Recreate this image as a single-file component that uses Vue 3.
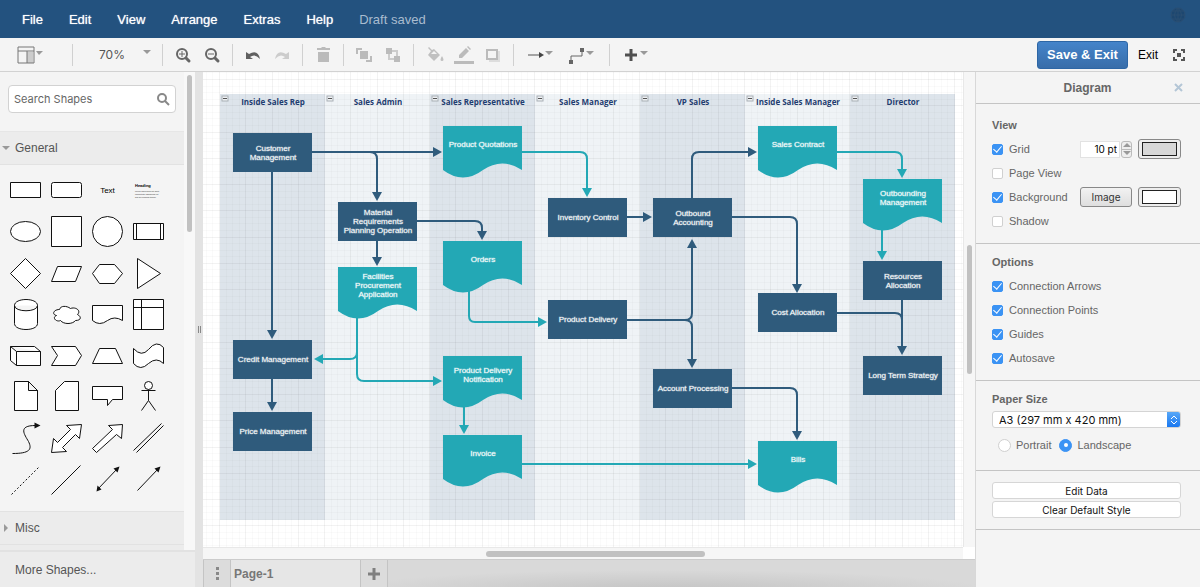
<script setup>
import { ref } from 'vue'

const menus = ['File', 'Edit', 'View', 'Arrange', 'Extras', 'Help']

const shapes = [
  { name: 'Rectangle', d: 'M-15-8H15V7H-15Z' },
  { name: 'Rounded Rectangle', d: 'M-13-8H13Q15-8 15-6V5Q15 7 13 7H-13Q-15 7-15 5V-6Q-15-8-13-8Z' },
  { name: 'Text', kind: 'text' },
  { name: 'Textbox', kind: 'heading' },
  { name: 'Ellipse', d: 'M-15 0A15 10 0 1 1 15 0A15 10 0 1 1-15 0Z' },
  { name: 'Square', d: 'M-15-15H15V15H-15Z' },
  { name: 'Circle', d: 'M-15 0A15 15 0 1 1 15 0A15 15 0 1 1-15 0Z' },
  { name: 'Process', d: 'M-15-8H15V8H-15ZM-12-8V8M12-8V8' },
  { name: 'Diamond', d: 'M0-15L15 0L0 15L-15 0Z' },
  { name: 'Parallelogram', d: 'M-15 8L-9-7H15L9 8Z' },
  { name: 'Hexagon', d: 'M-15 0L-8-9H7L15 0L7 10H-8Z' },
  { name: 'Triangle', d: 'M-11-15L12 0L-11 15Z' },
  { name: 'Cylinder', d: 'M-11-9C-11-17 12-17 12-9V9C12 17-11 17-11 9ZM-11-9C-11-2 12-2 12-9' },
  { name: 'Cloud', d: 'M-7-5C-13-5-15 0-10 1C-15 3-10 8-6 6C-3 10 6 10 9 6C15 6 15 2 11 0C15-4 9-8 4-6C0-9-6-9-7-5Z' },
  { name: 'Document', d: 'M-15-9H15V6Q7 1 0 6Q-8 12-15 6Z' },
  { name: 'Internal Storage', d: 'M-15-15H15V15H-15ZM-7-15V15M-15-7H15' },
  { name: 'Cube', d: 'M-15-9H9L15-4V10H-9L-15 5ZM-15-9L-9-4H15M-9-4V10' },
  { name: 'Step', d: 'M-15-9H9L15 0L9 10H-15L-9 0Z' },
  { name: 'Trapezoid', d: 'M-15 8L-8-7H8L15 8Z' },
  { name: 'Tape', d: 'M-15-7Q-7 2 0-6Q8-16 15-8V8Q8 1 0 8Q-8 16-15 8Z' },
  { name: 'Note', d: 'M-11-15H3L12-6V14H-11ZM3-15V-6H12Z' },
  { name: 'Card', d: 'M-2-15H12V14H-11V-6Z' },
  { name: 'Callout', d: 'M-15-10H15V3H5L0 9V3H-15Z' },
  { name: 'Actor', d: 'M-4-11A4 4 0 1 1 4-11A4 4 0 1 1-4-11ZM0-7V4M-7-6H7M0 4L-7 14M0 4L7 14' },
  { name: 'Curve', d: 'M-13 15C4 15 7 11 3 3C-1-4-8-13 10-13', open: true, head: 'M9-16L15-13L9-10Z' },
  { name: 'Bidirectional Arrow', d: 'M15-14L13 0L9-4L-4 9L0 13L-15 14L-13 0L-9 4L4-9L0-13Z' },
  { name: 'Arrow', d: 'M15-14L14 0L9-4L-11 14L-15 10L5-9L1-13Z' },
  { name: 'Link', d: 'M-15 12L13-15M-12 14L15-13', open: true },
  { name: 'Dashed Line', d: 'M-14 15L14-13', open: true, dash: '2 2' },
  { name: 'Line', d: 'M-15 15L14-14', open: true },
  { name: 'Bidirectional Connector', d: 'M-10 10L10-11', open: true, head: 'M12-13L10-7L6-11ZM-11 12L-10 6L-6 10Z' },
  { name: 'Directional Connector', d: 'M-11 11L10-11', open: true, head: 'M12-13L10-7L6-11Z' }
]

const laneNames = ['Inside Sales Rep', 'Sales Admin', 'Sales Representative', 'Sales Manager', 'VP Sales', 'Inside Sales Manager', 'Director']
const lanes = laneNames.map((title, i) => ({ title, x: 17 + i * 105 }))

const node = (lane, y, text, doc = false) => ({
  x: 30 + lane * 105,
  y,
  lines: text.split('|'),
  doc
})
const nodes = [
  node(0, 61, 'Customer|Management'),
  node(0, 268, 'Credit Management'),
  node(0, 340, 'Price Management'),
  node(1, 130, 'Material|Requirements|Planning Operation'),
  node(1, 195, 'Facilities|Procurement|Application', true),
  node(2, 54, 'Product Quotations', true),
  node(2, 169, 'Orders', true),
  node(2, 284, 'Product Delivery|Notification', true),
  node(2, 363, 'Invoice', true),
  node(3, 126, 'Inventory Control'),
  node(3, 228, 'Product Delivery'),
  node(4, 126, 'Outbound|Accounting'),
  node(4, 297, 'Account Processing'),
  node(5, 54, 'Sales Contract', true),
  node(5, 221, 'Cost Allocation'),
  node(5, 369, 'Bills', true),
  node(6, 107, 'Outbounding|Management', true),
  node(6, 189, 'Resources|Allocation'),
  node(6, 284, 'Long Term Strategy')
]
const lineY = (n, i) => n.y + (n.doc ? 21 : 22) + Math.ceil((i - (n.lines.length - 1) / 2) * 9)

const navyEdges = [
  'M109 80H235', 'M167 80Q174 80 174 87V125', 'M69 100V263', 'M69 306V335',
  'M214 149H272Q279 149 279 156V164', 'M174 169V190',
  'M424 145H445', 'M424 248H482Q489 248 489 241V171', 'M482 248Q489 248 489 255V292',
  'M489 127V87Q489 80 496 80H550', 'M529 145H587Q594 145 594 152V217',
  'M699 228V279', 'M529 316H587Q594 316 594 323V364'
]
const tealEdges = [
  'M319 80H377Q384 80 384 87V121', 'M154 245V280Q154 287 147 287H115', 'M154 280V302Q154 309 161 309H235',
  'M266 219V244Q266 250 272 250H340', 'M261 335V358', 'M319 392H550',
  'M634 80H692Q699 80 699 87V102', 'M679 157V184'
]

const minor = Array.from({ length: 16 }, (_, i) => i).filter(i => i % 4).map(i => Math.round(i * 105 / 16))
const major = [0, 26, 53, 79]

const view = ref({ grid: true, pageView: false, background: true, shadow: false })
const options = ref([
  { id: 'arrows', label: 'Connection Arrows', on: true },
  { id: 'points', label: 'Connection Points', on: true },
  { id: 'guides', label: 'Guides', on: true },
  { id: 'autosave', label: 'Autosave', on: true }
])
const orientation = ref('landscape')
const gridSize = ref('10 pt')
</script>

<template>
  <div class="app">
    <header class="menubar">
      <button v-for="m in menus" :key="m" class="menu">{{ m }}</button>
      <span class="status">Draft saved</span>
      <button class="globe" aria-label="Language">
        <svg width="16" height="16" viewBox="0 0 16 16"><circle cx="8" cy="8" r="7" /><path d="M1 8H15M8 1V15M3 4H13M3 12H13M8 1Q1 8 8 15Q15 8 8 1" /></svg>
      </button>
    </header>

    <div class="toolbar">
      <div class="group g-view">
        <button class="tool wide" aria-label="View">
          <svg width="28" height="20" viewBox="0 0 28 20"><path d="M11 7H17V18H11Z" fill="#ccc" /><path d="M2 2H18V18H2ZM2 6H18M11 6V18" fill="none" stroke="#777" /><path d="M20 6H27L23 10Z" fill="#999" /></svg>
        </button>
      </div>
      <div class="group g-zoom">
        <button class="zoom"><span>70%</span><svg width="8" height="9" viewBox="0 0 8 9"><path d="M0 0H8L4 4Z" fill="#999" /></svg></button>
      </div>
      <div class="group g-pair">
        <button class="tool" aria-label="Zoom in"><svg width="18" height="18" viewBox="0 0 18 18" fill="none" stroke="#666"><circle cx="8" cy="8" r="5" stroke-width="2" /><path d="M12 12L15 15" stroke-width="3" stroke-linecap="round" /><path d="M5 8H11M8 5V11" /></svg></button>
        <button class="tool" aria-label="Zoom out"><svg width="18" height="18" viewBox="0 0 18 18" fill="none" stroke="#666"><circle cx="8" cy="8" r="5" stroke-width="2" /><path d="M12 12L15 15" stroke-width="3" stroke-linecap="round" /><path d="M5 8H11" /></svg></button>
      </div>
      <div class="group g-pair">
        <button class="tool" aria-label="Undo"><svg width="18" height="18" viewBox="0 0 18 18"><path d="M2 6V13H9L6 11Q11 7 16 13Q14 3 5 8Z" fill="#606060" /></svg></button>
        <button class="tool" aria-label="Redo"><svg width="18" height="18" viewBox="0 0 18 18"><path d="M16 6V13H9L12 11Q7 7 2 13Q4 3 13 8Z" fill="#ccc" /></svg></button>
      </div>
      <div class="group g-single">
        <button class="tool" aria-label="Delete"><svg width="18" height="18" viewBox="0 0 18 18" fill="#bbb"><path d="M3 2H7L8 1H11L12 2H16V4H3ZM4 6H15V16H4Z" /></svg></button>
      </div>
      <div class="group g-pair">
        <button class="tool" aria-label="To front"><svg width="18" height="18" viewBox="0 0 18 18"><path d="M2 8V3H7M11 15H16V10" fill="none" stroke="#bbb" stroke-width="2" /><path d="M5 5H13V13H5Z" fill="#bbb" /></svg></button>
        <button class="tool" aria-label="To back"><svg width="18" height="18" viewBox="0 0 18 18"><path d="M5 5H13V13H5Z" fill="none" stroke="#ccc" stroke-width="2" /><path d="M2 2H8V8H2ZM10 10H16V16H10Z" fill="#bbb" /></svg></button>
      </div>
      <div class="group g-style">
        <button class="tool" aria-label="Fill color"><svg width="18" height="18" viewBox="0 0 18 18"><path d="M2 2L3 1L6 4L8 3L14 9L8 15L2 9L5 5ZM16 10Q19 15 16 15Q13 15 16 10Z" fill="#c0c0c0" /><path d="M5 8L8 5L11 8Z" fill="#f4f4f4" /></svg></button>
        <button class="tool" aria-label="Line color"><svg width="20" height="18" viewBox="0 0 20 18" fill="#bbb"><path d="M5 12V9L12 2L15 5L8 12ZM13 1L14 0L17 3L16 4Z" /><path d="M0 15H20V18H0Z" /></svg></button>
        <button class="tool" aria-label="Shadow"><svg width="18" height="18" viewBox="0 0 18 18"><path d="M5 5H16V16H5Z" fill="#ddd" /><path d="M3 4H13V13H3Z" fill="#f4f4f4" stroke="#bbb" stroke-width="2" /></svg></button>
      </div>
      <div class="group g-line">
        <button class="tool wide" aria-label="Connection"><svg width="28" height="18" viewBox="0 0 28 18"><path d="M1 9H14" stroke="#555" /><path d="M12 6L17 9L12 12Z" fill="#444" /><path d="M18 5H26L22 9Z" fill="#999" /></svg></button>
        <button class="tool wide" aria-label="Waypoints"><svg width="28" height="18" viewBox="0 0 28 18"><path d="M2 15V10H13V4" fill="none" stroke="#666" /><path d="M0 14H4V18H0ZM11 2H15V6H11Z" fill="#666" /><path d="M17 5H25L21 9Z" fill="#999" /></svg></button>
      </div>
      <div class="group g-add">
        <button class="tool wide" aria-label="Insert"><svg width="28" height="18" viewBox="0 0 28 18"><path d="M8 3V15M2 9H14" stroke="#505050" stroke-width="3" /><path d="M17 5H25L21 9Z" fill="#999" /></svg></button>
      </div>
      <div class="actions">
        <button class="save">Save &amp; Exit</button>
        <button class="exit">Exit</button>
        <button class="tool full" aria-label="Fullscreen"><svg width="12" height="12" viewBox="0 0 12 12"><path d="M1 4V1H4M8 1H11V4M11 8V11H8M4 11H1V8" fill="none" stroke="#555" stroke-width="2" /><path d="M4 4H8V8H4Z" fill="#555" /></svg></button>
      </div>
    </div>

    <main class="body">
      <aside class="sidebar">
        <div class="scroller">
          <div class="sections">
            <div class="searchrow">
              <label class="search">
                <input type="text" placeholder="Search Shapes" aria-label="Search Shapes">
                <svg width="14" height="14" viewBox="0 0 14 14" fill="none" stroke="#888" stroke-width="2"><circle cx="6" cy="6" r="4" /><path d="M9 9L13 13" /></svg>
              </label>
            </div>
            <button class="section"><svg width="8" height="8" viewBox="0 0 8 8"><path d="M0 2H8L4 6Z" fill="#999" /></svg>General</button>
            <div class="palette">
              <button v-for="s in shapes" :key="s.name" class="shape" :aria-label="s.name">
                <span v-if="s.kind === 'text'" class="text-shape">Text</span>
                <svg v-else-if="s.kind === 'heading'" width="41" height="41" viewBox="0 0 41 41">
                  <text class="h-title" x="7" y="17">Heading</text>
                  <text class="h-body" x="7" y="22">Lorem ipsum dolor sit amet</text>
                  <text class="h-body" x="7" y="25">consectetur adipisicing elit</text>
                  <text class="h-body" x="7" y="28">sed do eiusmod tempor</text>
                </svg>
                <svg v-else width="41" height="41" viewBox="-20.5 -20.5 41 41">
                  <path :d="s.d" :fill="s.open ? 'none' : '#fff'" stroke="#111" :stroke-dasharray="s.dash" />
                  <path v-if="s.head" :d="s.head" fill="#111" />
                </svg>
              </button>
            </div>
            <button class="section"><svg width="8" height="8" viewBox="0 0 8 8"><path d="M2 0L6 4L2 8Z" fill="#999" /></svg>Misc</button>
            <div class="section-end"></div>
          </div>
          <div class="track"><div class="thumb"></div></div>
        </div>
        <button class="more">More Shapes...</button>
      </aside>
      <div class="splitter"><i></i></div>

      <section class="center">
        <div class="viewport">
          <svg class="canvas" width="100%" height="100%">
            <defs>
              <pattern id="grid" x="16" y="7" width="105" height="105" patternUnits="userSpaceOnUse">
                <template v-for="p in minor" :key="p">
                  <rect class="minor" :x="p" y="0" width="1" height="105" />
                  <rect class="minor" x="0" :y="p" width="105" height="1" />
                </template>
                <template v-for="p in major" :key="p">
                  <rect class="major" :x="p" y="0" width="1" height="105" />
                  <rect class="major" x="0" :y="p" width="105" height="1" />
                </template>
              </pattern>
              <marker id="navy" markerUnits="userSpaceOnUse" markerWidth="10" markerHeight="10" refX="5" refY="5" orient="auto"><path d="M0 0L9 5L0 10Z" fill="#2f5b7c" /></marker>
              <marker id="teal" markerUnits="userSpaceOnUse" markerWidth="10" markerHeight="10" refX="5" refY="5" orient="auto"><path d="M0 0L9 5L0 10Z" fill="#23a8b5" /></marker>
            </defs>
            <rect v-for="(l, i) in lanes" :key="l.title" :x="l.x" y="22" width="105" height="426" :fill="i % 2 ? '#eff3f6' : '#dde4eb'" />
            <rect width="100%" height="100%" fill="url(#grid)" />
            <g v-for="l in lanes" :key="l.title">
              <rect :x="l.x + 2" y="24" width="6" height="5" fill="#eef1f4" stroke="#aab0b6" />
              <rect :x="l.x + 3" y="26" width="4" height="1" fill="#555" />
              <text class="lane-title" :x="l.x + 53" y="33">{{ l.title }}</text>
            </g>
            <g class="edges">
              <path v-for="d in tealEdges" :key="d" :d="d" stroke="#23a8b5" marker-end="url(#teal)" />
              <path d="M634 241H692Q699 241 699 248" stroke="#2f5b7c" />
              <path v-for="d in navyEdges" :key="d" :d="d" stroke="#2f5b7c" marker-end="url(#navy)" />
            </g>
            <g v-for="n in nodes" :key="n.x + '-' + n.y">
              <path v-if="n.doc" :transform="`translate(${n.x} ${n.y})`" d="M0 0H79V44Q59 31 40 44Q20 59 0 44Z" fill="#23a8b5" />
              <rect v-else :x="n.x" :y="n.y" width="79" height="39" fill="#2f5b7c" />
              <text v-for="(t, i) in n.lines" :key="t" class="label" :x="n.x + 40" :y="lineY(n, i)">{{ t }}</text>
            </g>
          </svg>
          <div class="vtrack"><div class="vthumb"></div></div>
          <div class="htrack"><div class="hthumb"></div></div>
        </div>
        <footer class="tabs">
          <button class="tab-icon" aria-label="Pages"><svg width="3" height="13" viewBox="0 0 3 13" fill="#888"><path d="M0 0H3V3H0ZM0 5H3V8H0ZM0 10H3V13H0Z" /></svg></button>
          <button class="tab">Page-1</button>
          <button class="tab-icon" aria-label="Insert page"><svg width="12" height="12" viewBox="0 0 12 12"><path d="M6 0V12M0 6H12" stroke="#808080" stroke-width="3" /></svg></button>
        </footer>
      </section>

      <aside class="format">
        <div class="format-head"><h2>Diagram</h2><button aria-label="Close"><svg width="9" height="9" viewBox="0 0 9 9"><path d="M1 1L8 8M8 1L1 8" stroke="#b4c6d6" stroke-width="2" /></svg></button></div>
        <div class="panel first">
          <h3>View</h3>
          <div class="row">
            <label><input v-model="view.grid" type="checkbox">Grid</label>
            <div class="stepper">
              <input v-model="gridSize" type="text" aria-label="Grid size">
              <span class="steps">
                <button aria-label="Increase"><svg width="8" height="4" viewBox="0 0 8 4"><path d="M0 4L4 0L8 4Z" fill="#999" /></svg></button>
                <button aria-label="Decrease"><svg width="8" height="4" viewBox="0 0 8 4"><path d="M0 0L4 4L8 0Z" fill="#999" /></svg></button>
              </span>
            </div>
            <button class="swatch" aria-label="Grid color"><i class="gray"></i></button>
          </div>
          <div class="row"><label><input v-model="view.pageView" type="checkbox">Page View</label></div>
          <div class="row">
            <label><input v-model="view.background" type="checkbox">Background</label>
            <button class="image">Image</button>
            <button class="swatch" aria-label="Background color"><i></i></button>
          </div>
          <div class="row"><label><input v-model="view.shadow" type="checkbox">Shadow</label></div>
        </div>
        <div class="panel">
          <h3>Options</h3>
          <div v-for="o in options" :key="o.id" class="row"><label><input v-model="o.on" type="checkbox">{{ o.label }}</label></div>
        </div>
        <div class="panel">
          <h3 id="paper">Paper Size</h3>
          <div class="select">
            <select aria-labelledby="paper"><option>A3 (297 mm x 420 mm)</option><option>A4 (210 mm x 297 mm)</option></select>
            <span class="chev"><svg width="8" height="10" viewBox="0 0 8 10"><path d="M1 4L4 1L7 4M1 6L4 9L7 6" fill="none" stroke="#fff" /></svg></span>
          </div>
          <div class="row radios">
            <label><input v-model="orientation" type="radio" name="orientation" value="portrait">Portrait</label>
            <label><input v-model="orientation" type="radio" name="orientation" value="landscape">Landscape</label>
          </div>
        </div>
        <div class="panel buttons">
          <button>Edit Data</button>
          <button>Clear Default Style</button>
        </div>
      </aside>
    </main>
  </div>
</template>

<style>
body { margin: 0; }
</style>

<style scoped>
* { box-sizing: border-box; }
.app {
  display: flex;
  flex-direction: column;
  height: 100vh;
  overflow: hidden;
  background: #f4f4f4;
  color: #555;
  font-family: "Liberation Sans", Arial, sans-serif;
  font-size: 12px;
}
button { margin: 0; padding: 0; border: 0; background: none; font: inherit; color: inherit; }
svg { display: block; }
h2, h3 { margin: 0; }

.menubar { display: flex; align-items: center; flex: none; height: 38px; padding: 0 14px 0 9px; background: #23527f; font-size: 13px; }
.menu { padding: 0 13px; color: #fff; text-shadow: 0 0 1px rgba(255, 255, 255, .8); }
.status { padding: 0 13px; color: #a9bccf; }
.globe { margin: 0 0 8px auto; }
.globe svg { fill: #1d4770; stroke: #2a4f73; }

.toolbar { display: flex; align-items: center; flex: none; height: 34px; border-bottom: 1px solid #d2d2d2; background: #f4f4f4; }
.group { display: flex; align-items: center; justify-content: center; flex: none; height: 22px; border-right: 1px solid #d0d0d0; }
.tool { display: flex; justify-content: center; width: 29px; }
.tool.wide { width: 42px; }
.g-view { width: 73px; padding-right: 13px; }
.g-zoom { width: 90px; }
.g-pair { width: 70px; }
.g-single { width: 41px; }
.g-style { width: 100px; }
.g-line { width: 96px; }
.g-add { width: 54px; border: 0; }
.zoom { display: flex; align-items: center; gap: 18px; padding-left: 15px; font-family: Inter, "Noto Sans", sans-serif; }
.actions { display: flex; align-items: center; margin-left: auto; padding-right: 7px; }
.save { height: 28px; width: 91px; border: 1px solid #2d66a5; border-radius: 3px; background: linear-gradient(#4584ca, #386da9); color: #fff; font-size: 13px; font-weight: bold; }
.exit { padding: 0 6px 0 10px; color: #000; }

.body { display: flex; flex: 1; min-height: 0; }
.sidebar { display: flex; flex-direction: column; flex: none; width: 195px; background: #f4f4f4; }
.scroller { display: flex; flex: 1; min-height: 0; border-bottom: 2px solid #e2e2e2; }
.sections { display: flex; flex-direction: column; flex: 1; min-width: 0; }
.searchrow { height: 60px; padding: 13px 8px 0; border-bottom: 1px solid #e6e6e6; }
.search { display: flex; align-items: center; height: 28px; padding: 0 5px; border: 1px solid #d2d2d2; border-radius: 4px; background: #fff; }
.search input { flex: 1; min-width: 0; padding: 0; border: 0; outline: 0; background: none; font: 11px Inter, "Noto Sans", sans-serif; }
.search input::placeholder { color: #666; }
.search svg { flex: none; }
.section { display: flex; align-items: center; gap: 5px; flex: none; height: 33px; padding-left: 2px; border-bottom: 1px solid #e2e2e2; background: #ececec; }
.palette { display: grid; flex: 1; grid-template-columns: repeat(4, 41px); grid-auto-rows: 1fr; padding: 5px 5px 11px; border-bottom: 1px solid #e2e2e2; }
.shape { display: flex; align-items: center; justify-content: center; min-height: 0; }
.text-shape { font-size: 8px; color: #000; }
.h-title { font-size: 4px; font-weight: bold; fill: #000; }
.h-body { font-size: 2px; fill: #333; }
.section-end { flex: none; height: 5px; background: #ececec; }
.track { flex: none; width: 11px; padding: 3px 3px 0; background: #f8f8f8; }
.thumb { height: 33%; border-radius: 3px; background: #c1c1c1; }
.more { flex: none; height: 35px; padding-left: 15px; background: #ececec; text-align: left; }
.splitter { display: flex; align-items: center; justify-content: center; flex: none; width: 8px; background: #e3e3e3; }
.splitter i { width: 3px; height: 7px; border: 1px solid #888; border-width: 0 1px; }

.center { display: flex; flex-direction: column; flex: 1; min-width: 0; }
.viewport { display: grid; flex: 1; min-height: 0; grid-template: minmax(0, 1fr) 12px / minmax(0, 1fr) 12px; background: #fff; }
.canvas { min-width: 0; }
.minor { fill: #000; fill-opacity: .02; }
.major { fill: #000; fill-opacity: .05; }
.lane-title { font: bold 8px "Open Sans", sans-serif; text-anchor: middle; fill: #1f3d70; }
.edges path { fill: none; stroke-width: 2; }
.label { font-size: 8px; text-anchor: middle; fill: #fff; stroke: #fff; stroke-width: 1; stroke-opacity: .3; }
.vtrack { padding-left: 3px; background: #f6f6f6; border-left: 1px solid #e8e8e8; display: flex; align-items: center; }
.vthumb { width: 5px; height: 27%; border-radius: 3px; background: #c1c1c1; }
.htrack { display: flex; align-items: center; padding-left: 283px; border-top: 1px solid #e8e8e8; background: #f6f6f6; }
.hthumb { width: 46%; height: 6px; border-radius: 3px; background: #c1c1c1; }
.tabs { display: flex; flex: none; height: 28px; border-top: 1px solid #ccc; background: radial-gradient(ellipse 320px 20px at 60% 110%, #c4c4c4, #d9d9d9); color: #777; }
.tab { width: 129px; padding-left: 3px; background: #e6e6e6; font-weight: bold; text-align: left; }
.tab-icon { display: flex; align-items: center; justify-content: center; width: 28px; border: 1px solid #c4c4c4; border-width: 0 1px; background: #dcdcdc; }

.format { flex: none; width: 225px; border-left: 1px solid #d8d8d8; background: #f4f4f4; color: #666; font-size: 11px; }
.format-head { display: flex; align-items: center; height: 32px; padding: 0 17px; border-bottom: 1px solid #c4c4c4; }
.format-head h2 { flex: 1; padding-left: 8px; font-size: 12px; text-align: center; }
.panel { padding: 8px 19px 10px 16px; border-bottom: 1px solid #c4c4c4; }
.panel.first { padding-top: 11px; }
.panel h3 { margin-bottom: 2px; font-size: 11px; line-height: 20px; }
.row { display: flex; align-items: center; height: 24px; }
.row label { display: flex; align-items: center; flex: 1; gap: 6px; }
.row input[type="checkbox"], .row input[type="radio"] { display: flex; align-items: center; justify-content: center; appearance: none; width: 11px; height: 11px; margin: 0; border: 1px solid #d0d0d0; border-radius: 2px; background: #fff; }
.row input[type="checkbox"]:checked, .row input[type="radio"]:checked { border-color: #3b93f4; background: #3b93f4; }
.row input[type="checkbox"]:checked::after { content: ""; width: 4px; height: 7px; margin-bottom: 2px; border: solid #fff; border-width: 0 1px 1px 0; transform: rotate(40deg); }
.row input[type="radio"] { width: 13px; height: 13px; border-radius: 50%; }
.row input[type="radio"]:checked::after { content: ""; width: 4px; height: 4px; border-radius: 50%; background: #fff; }
.stepper { display: flex; width: 52px; height: 17px; }
.stepper input { flex: 1; min-width: 0; padding: 0 2px; border: 1px solid #e2e2e2; background: #fff; color: #000; font: 10px Inter, sans-serif; text-align: right; }
.steps { display: grid; width: 11px; margin-left: 1px; border: 1px solid #bbb; border-radius: 3px; background: #eee; }
.steps button { display: flex; align-items: center; justify-content: center; }
.steps button + button { border-top: 1px solid #bbb; }
.swatch { display: flex; width: 43px; height: 20px; margin-left: 6px; padding: 2px 3px; border: 1px solid #888; border-radius: 3px; background: #eee; }
.swatch i { flex: 1; border: 1px solid #222; background: #fff; }
.swatch .gray { background: #d8d8d8; }
.image { width: 52px; height: 20px; border: 1px solid #888; border-radius: 3px; background: linear-gradient(#f2f2f2, #dedede); color: #333; font: 10px Inter, sans-serif; }
.select { display: flex; height: 17px; border: 1px solid #d4d4d4; border-radius: 3px; background: #fff; overflow: hidden; }
.select select { flex: 1; min-width: 0; appearance: none; padding: 0 6px; border: 0; background: none; color: #111; font: 11px Inter, sans-serif; }
.chev { display: flex; align-items: center; justify-content: center; width: 13px; background: linear-gradient(#58a8f8, #1a78f0); }
.radios { margin: 5px 0 3px; padding-left: 6px; gap: 8px; }
.radios label { flex: none; gap: 5px; }
.buttons { display: grid; gap: 2px; padding: 11px 19px 11px 16px; }
.buttons button { height: 17px; border: 1px solid #d6d6d6; border-radius: 3px; background: #fff; color: #111; font: 10px Inter, sans-serif; }
</style>
